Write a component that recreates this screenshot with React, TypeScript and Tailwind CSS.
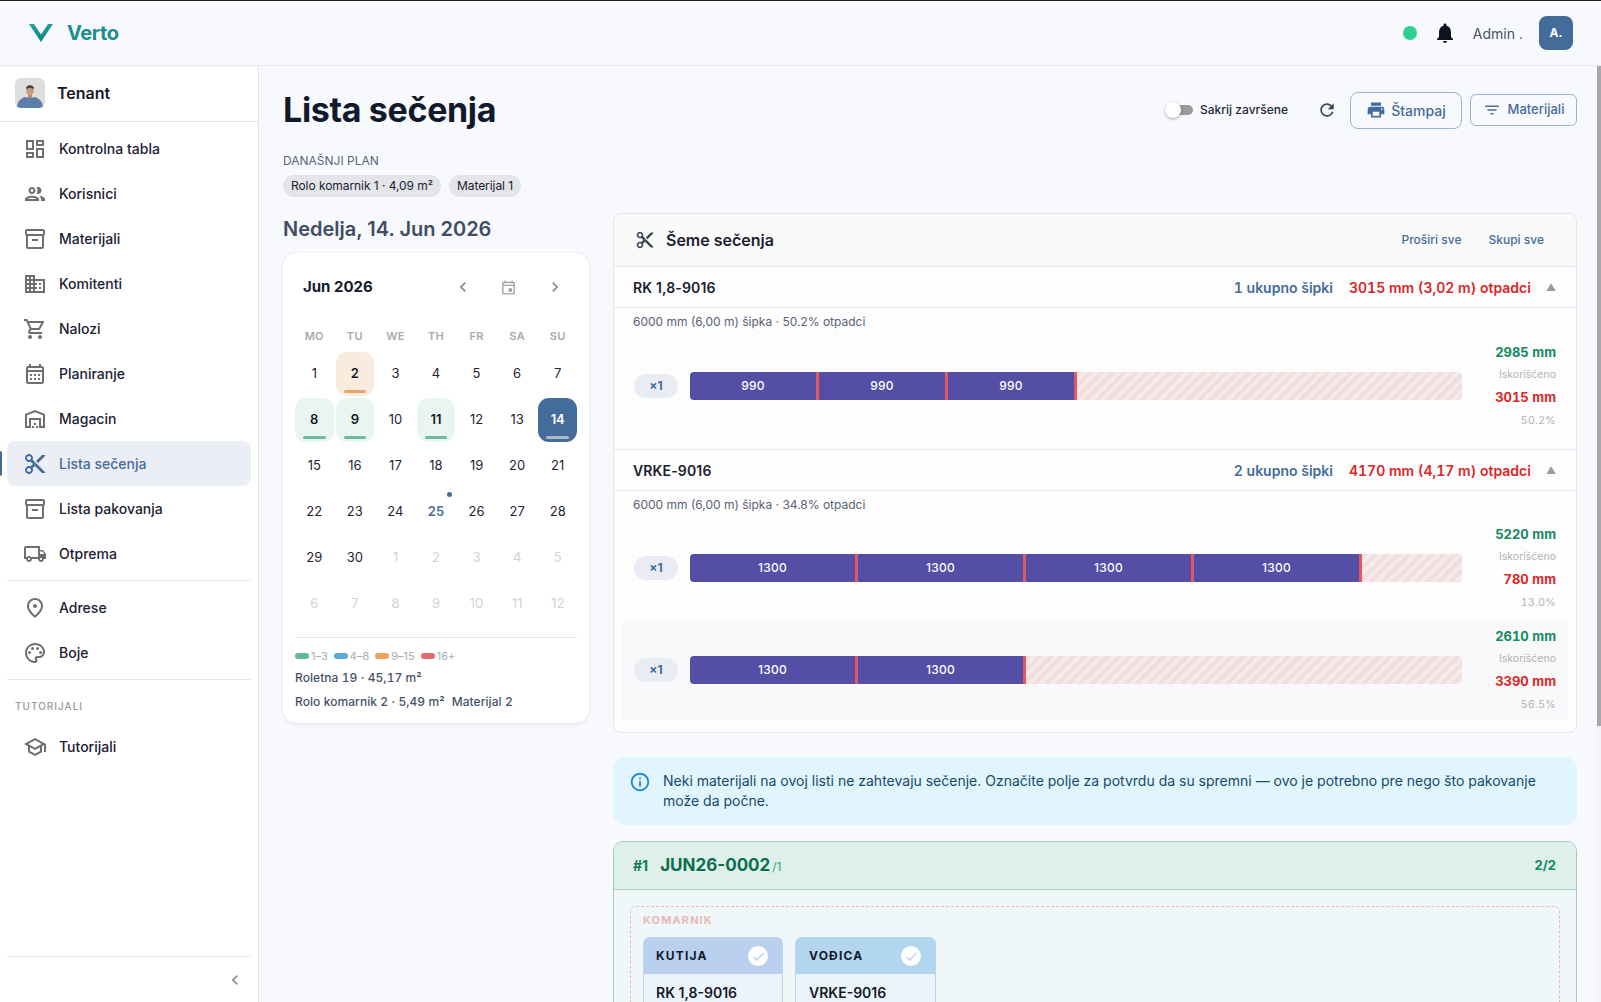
import React from "react";
import {
  MdOutlineDashboard, MdOutlineGroup, MdOutlineInventory2, MdOutlineShoppingCart, MdOutlineCalendarMonth,
  MdOutlineWarehouse, MdOutlineContentCut, MdOutlineLocalShipping, MdOutlinePlace, MdOutlinePalette,
  MdOutlineSchool, MdChevronLeft, MdChevronRight, MdOutlineEvent, MdNotifications, MdRefresh, MdPrint,
  MdFilterList, MdInfoOutline, MdCheck, MdBusiness,
} from "react-icons/md";

const nav1 = [
  ["Kontrolna tabla", MdOutlineDashboard],
  ["Korisnici", MdOutlineGroup],
  ["Materijali", MdOutlineInventory2],
  ["Komitenti", MdBusiness],
  ["Nalozi", MdOutlineShoppingCart],
  ["Planiranje", MdOutlineCalendarMonth],
  ["Magacin", MdOutlineWarehouse],
  ["Lista sečenja", MdOutlineContentCut],
  ["Lista pakovanja", MdOutlineInventory2],
  ["Otprema", MdOutlineLocalShipping],
] as const;

function NavItem({ label, Icon, active }: { label: string; Icon: React.ComponentType<{ className?: string }>; active?: boolean }) {
  return (
    <div className={`relative mx-[7px] flex h-[45px] items-center rounded-lg pl-[16px] ${active ? "bg-[#ebeef4] text-[#446c9a]" : "text-[#1b2133]"}`}>
      {active && <span className="absolute -left-[7px] top-[10px] h-[25px] w-[2px] rounded-r bg-[#446c9a]" />}
      <Icon className={`h-[24px] w-[24px] shrink-0 ${active ? "text-[#446c9a]" : "text-[#6f6f6f]"}`} />
      <span className="ml-[12px] text-[14px] font-medium">{label}</span>
    </div>
  );
}

function Avatar() {
  return (
    <svg viewBox="0 0 30 30" className="h-[30px] w-[30px] rounded-md">
      <rect width="30" height="30" fill="#dedede" />
      <path d="M2 30c0-6 3-9 8-11l5 1 5-1c5 2 8 5 8 11z" fill="#5b7fa8" />
      <rect x="13" y="16" width="4" height="4" fill="#b98a72" />
      <ellipse cx="15" cy="12.500" rx="3.800" ry="5" fill="#c99a80" />
      <path d="M11 11c-.5-5 8.500-5 8 0-2.500-1.500-5.500-1.500-8 0z" fill="#4d4036" />
    </svg>
  );
}

function Sidebar() {
  return (
    <aside className="flex w-[259px] shrink-0 flex-col border-r border-[#dfe5f0] bg-white">
      <div className="flex h-[56px] shrink-0 items-center gap-3 border-b border-[#e2e6ef] pb-[1px] pl-[15px]">
        <Avatar />
        <span className="text-[16px] font-semibold text-[#141a2a]">Tenant</span>
      </div>
      <div className="flex flex-col pt-[4px]">
        {nav1.map(([l, I]) => <NavItem key={l} label={l} Icon={I} active={l === "Lista sečenja"} />)}
      </div>
      <div className="mx-[7px] mb-[4px] mt-[4px] border-t border-[#e2e6ef]" />
      <NavItem label="Adrese" Icon={MdOutlinePlace} />
      <NavItem label="Boje" Icon={MdOutlinePalette} />
      <div className="mx-[7px] mt-[4px] border-t border-[#e2e6ef]" />
      <div className="pl-[15px] pt-[19px] text-[10px] font-medium tracking-[0.1em] text-[#9a9a9a]">TUTORIJALI</div>
      <div className="mt-[10px]"><NavItem label="Tutorijali" Icon={MdOutlineSchool} /></div>
      <div className="mx-[7px] mt-auto flex h-[46px] items-center justify-end border-t border-[#e2e6ef] pr-[6px]">
        <MdChevronLeft className="h-[20px] w-[20px] text-[#8a8a8a]" />
      </div>
    </aside>
  );
}

type Cell = { d: number; muted?: boolean; bg?: string; bar?: string; selected?: boolean; today?: boolean };
const cells: Cell[] = [
  { d: 1 }, { d: 2, bg: "bg-[#faebdf]", bar: "bg-[#e8a468]" }, { d: 3 }, { d: 4 }, { d: 5 }, { d: 6 }, { d: 7 },
  { d: 8, bg: "bg-[#e8f5f0]", bar: "bg-[#6dbb9b]" }, { d: 9, bg: "bg-[#e8f5f0]", bar: "bg-[#6dbb9b]" }, { d: 10 },
  { d: 11, bg: "bg-[#e8f5f0]", bar: "bg-[#6dbb9b]" }, { d: 12 }, { d: 13 }, { d: 14, selected: true },
  ...[15, 16, 17, 18, 19, 20, 21, 22, 23, 24].map((d) => ({ d })),
  { d: 25, today: true }, { d: 26 }, { d: 27 }, { d: 28 }, { d: 29 }, { d: 30 },
  ...[1, 2, 3, 4, 5, 6, 7, 8, 9, 10, 11, 12].map((d) => ({ d, muted: true })),
];

function Calendar() {
  return (
    <div className="w-[306px] rounded-[14px] bg-white px-3 pb-[12px] pt-[21px] shadow-[0_1px_4px_rgba(30,41,70,0.10)]">
      <div className="flex h-[26px] items-center pl-2">
        <span className="text-[15px] font-bold text-[#141a2a]">Jun 2026</span>
        <div className="ml-auto flex items-center text-[#8a8a8a]">
          <MdChevronLeft className="h-[20px] w-[20px]" />
          <MdOutlineEvent className="ml-[27px] h-[17px] w-[17px] text-[#a3a3a3]" />
          <MdChevronRight className="ml-[28px] mr-[12px] h-[20px] w-[20px]" />
        </div>
      </div>
      <div className="mt-[29px] grid grid-cols-7 gap-x-[2px] text-center text-[11px] font-semibold leading-[14px] tracking-[0.03em] text-[#aaaaaa]">
        {["MO", "TU", "WE", "TH", "FR", "SA", "SU"].map((w) => <div key={w}>{w}</div>)}
      </div>
      <div className="mt-[9px] grid grid-cols-7 gap-x-[2px] gap-y-[2px]">
        {cells.map((c, i) => (
          <div
            key={i}
            className={`relative flex h-[44px] items-center justify-center rounded-[11px] text-[13px] ${c.selected ? "bg-[#446c9a] font-semibold text-white" : c.bg ? `${c.bg} font-semibold text-[#141a2a]` : c.today ? "font-semibold text-[#446c9a]" : c.muted ? "text-[#d2d2d2]" : "text-[#1f2430]"}`}
          >
            {c.d}
            {c.bar && <span className={`absolute bottom-[3px] left-[8px] right-[8px] h-[3px] rounded-sm ${c.bar}`} />}
            {c.selected && <span className="absolute bottom-[3px] left-[8px] right-[8px] h-[3px] rounded-sm bg-[#aab9cc]" />}
            {c.today && <span className="absolute right-[3px] top-[2px] h-[5px] w-[5px] rounded-full bg-[#446c9a]" />}
          </div>
        ))}
      </div>
      <div className="mt-[11px] border-t border-[#e2e4ea] pt-[12px]">
        <div className="flex items-center gap-[6px] text-[11px] leading-[12px] text-[#adadad]">
          {[["bg-[#5fb896]", "1–3"], ["bg-[#5aa9e0]", "4–8"], ["bg-[#e8a45f]", "9–15"], ["bg-[#e56b6b]", "16+"]].map(([c, l]) => (
            <span key={l} className="flex items-center gap-[2px]">
              <span className={`h-[6px] w-[14px] rounded-full ${c}`} />
              {l}
            </span>
          ))}
        </div>
        <div className="mt-[7px] text-[12px] font-medium leading-[18px] tabular-nums tracking-[0.005em] text-[#46526a]">Roletna 19 · 45,17 m²</div>
        <div className="mt-[6px] flex gap-[7px] text-[12px] font-medium leading-[18px] tabular-nums tracking-[0.005em] text-[#46526a]">
          <span>Rolo komarnik 2 · 5,49 m²</span>
          <span>Materijal 2</span>
        </div>
      </div>
    </div>
  );
}

function Stat({ used, waste, pct }: { used: string; waste: string; pct: string }) {
  return (
    <div className="w-[94px] shrink-0 text-right tabular-nums">
      <div className="text-[13px] font-bold leading-[23px] text-[#118a5e]">{used}</div>
      <div className="text-[10.5px] leading-[22px] text-[#b3b3b3]">Iskorišćeno</div>
      <div className="text-[13px] font-bold leading-[23px] text-[#dc2626]">{waste}</div>
      <div className="text-[10.5px] leading-[23px] tracking-[0.03em] text-[#b3b3b3]">{pct}</div>
    </div>
  );
}

function BarRow({ label, widthClass, n, used, waste, pct, alt }: { label: string; widthClass: string; n: number; used: string; waste: string; pct: string; alt?: boolean }) {
  return (
    <div className={`flex h-[100px] items-center rounded px-3 ${alt ? "bg-[#f9f9fb]" : ""}`}>
      <span className="flex h-[24px] w-[44px] shrink-0 items-center justify-center rounded-full bg-[#e9edf3] text-[12px] font-bold text-[#446c9a]">×1</span>
      <div className="ml-3 flex h-[28px] flex-1 overflow-hidden rounded">
        {Array.from({ length: n }).map((_, i) => (
          <div key={i} className={`flex shrink-0 items-center justify-center border-r-[3px] border-[#e05a5f] bg-[#544ea5] text-[12px] font-medium tracking-[0.02em] text-white ${widthClass}`}>
            {label}
          </div>
        ))}
        <div className="flex-1 bg-[repeating-linear-gradient(135deg,#f3dedf_0px,#f3dedf_4px,#f5e9ea_4px,#f5e9ea_8px)]" />
      </div>
      <Stat used={used} waste={waste} pct={pct} />
    </div>
  );
}

function GroupHead({ name, total, waste, top }: { name: string; total: string; waste: string; top?: boolean }) {
  return (
    <div className={`flex items-center border-b border-[#e5e8f0] pl-[19px] pr-[20px] text-[14px] ${top ? "h-[41px]" : "h-[42px] border-t"}`}>
      <span className="font-semibold tracking-[0.01em] text-[#1a2030]">{name}</span>
      <span className="ml-auto font-semibold tabular-nums text-[#446c9a]">{total}</span>
      <span className="ml-4 font-semibold tabular-nums text-[#dc2626]">{waste}</span>
      <span className="ml-[15px] text-[10px] text-[#9a9a9a]">▲</span>
    </div>
  );
}

function Schemes() {
  return (
    <div className="overflow-hidden rounded-lg border border-[#e2e6ef] bg-[#fdfdfe]">
      <div className="flex h-[53px] items-center border-b border-[#e5e8f0] bg-[#fafafb] pl-[21px] pr-[32px]">
        <MdOutlineContentCut className="h-[20px] w-[20px] text-[#3a4356]" />
        <span className="ml-[11px] text-[16px] font-semibold text-[#1a2030]">Šeme sečenja</span>
        <span className="ml-auto text-[12px] font-medium text-[#446c9a]">Proširi sve</span>
        <span className="ml-[27px] text-[12px] font-medium text-[#446c9a]">Skupi sve</span>
      </div>
      <GroupHead top name="RK 1,8-9016" total="1 ukupno šipki" waste="3015 mm (3,02 m) otpadci" />
      <div className="px-2 pb-[13px] pt-[5px]">
        <div className="pl-[11px] text-[12px] leading-[18px] text-[#596274]">6000 mm (6,00 m) šipka · 50.2% otpadci</div>
        <div className="mt-[5px]"><BarRow label="990" widthClass="w-[129px]" n={3} used="2985 mm" waste="3015 mm" pct="50.2%" /></div>
      </div>
      <GroupHead name="VRKE-9016" total="2 ukupno šipki" waste="4170 mm (4,17 m) otpadci" />
      <div className="px-2 pb-[12px] pt-[5px]">
        <div className="pl-[11px] text-[12px] leading-[18px] text-[#596274]">6000 mm (6,00 m) šipka · 34.8% otpadci</div>
        <div className="mt-[4px]"><BarRow label="1300" widthClass="w-[168px]" n={4} used="5220 mm" waste="780 mm" pct="13.0%" /></div>
        <div className="mt-[2px]"><BarRow alt label="1300" widthClass="w-[168px]" n={2} used="2610 mm" waste="3390 mm" pct="56.5%" /></div>
      </div>
    </div>
  );
}

function Part({ title, code, head, width, pad }: { title: string; code: string; head: string; width: string; pad: string }) {
  return (
    <div className={`overflow-hidden rounded-md border border-[#bcd5ef] bg-[#ecf4fb] ${width}`}>
      <div className={`flex h-[36px] items-center justify-between pr-[14px] ${pad} ${head}`}>
        <span className="text-[12px] font-bold tracking-[0.1em] text-[#141a2a]">{title}</span>
        <span className="flex h-[20px] w-[20px] items-center justify-center rounded-full bg-white text-[#b9d3f0]"><MdCheck className="h-[15px] w-[15px]" /></span>
      </div>
      <div className={`py-[8px] text-[14px] font-semibold text-[#141a2a] ${pad}`}>{code}</div>
    </div>
  );
}

export default function App() {
  return (
    <div className="flex h-screen flex-col overflow-hidden border-t border-[#222] bg-[#f8f9fd] font-['Inter',sans-serif]">
      <header className="flex h-[65px] shrink-0 items-center border-b border-[#e2e6ef] bg-[#f8f9fd] pl-[29px] pr-[28px]">
        <svg viewBox="0 0 24 18" className="h-[18px] w-[24px]">
          <defs>
            <linearGradient id="vg" x1="0" y1="0" x2="0" y2="1">
              <stop offset="0" stopColor="#21a5a0" />
              <stop offset="1" stopColor="#0f7f7c" />
            </linearGradient>
          </defs>
          <path d="M0 0h5l7 10.500L19 0h5L12 18z" fill="url(#vg)" />
        </svg>
        <span className="ml-[14px] text-[20px] font-bold tracking-[-0.02em] text-[#1a8f8c]">Verto</span>
        <span className="ml-auto h-[14px] w-[14px] rounded-full bg-[#2dd08f]" />
        <MdNotifications className="ml-[16px] h-[24px] w-[24px] text-[#0c1220]" />
        <span className="ml-[16px] text-[14px] text-[#46526a]">Admin .</span>
        <span className="ml-[16px] flex h-[34px] w-[34px] items-center justify-center rounded-lg bg-[#446c9a] text-[12px] font-bold text-white">A.</span>
      </header>
      <div className="flex min-h-0 flex-1">
        <Sidebar />
        <main className="min-w-0 flex-1 overflow-hidden pl-6 pr-5">
          <div className="flex h-[72px] items-center pt-[16px]">
            <h1 className="text-[34px] font-bold leading-[44px] tracking-[-0.01em] text-[#111a2c]">Lista sečenja</h1>
            <div className="ml-auto flex items-center">
              <span className="relative h-[10px] w-[21px] rounded-full bg-[#9b9b9b]">
                <span className="absolute -left-[7px] -top-[3px] h-[16px] w-[16px] rounded-full bg-white shadow-[0_1px_3px_rgba(0,0,0,0.35)]" />
              </span>
              <span className="ml-[7px] text-[12px] font-medium text-[#1f2937]">Sakrij završene</span>
              <MdRefresh className="ml-[29px] h-[20px] w-[20px] text-[#3a4356]" />
              <span className="ml-[13px] flex h-[37px] w-[112px] items-center justify-center gap-[5px] rounded-lg border border-[#9ab4d2] text-[14px] font-medium text-[#446c9a]">
                <MdPrint className="h-[20px] w-[20px]" />Štampaj
              </span>
              <span className="ml-2 flex h-[32px] w-[107px] items-center justify-center gap-[7px] rounded-md border border-[#9ab4d2] text-[13px] font-medium text-[#446c9a]">
                <MdFilterList className="h-[18px] w-[18px]" />Materijali
              </span>
            </div>
          </div>
          <div className="mt-[14px] text-[12px] leading-[18px] text-[#5b6679]">DANAŠNJI PLAN</div>
          <div className="mt-[5px] flex gap-2 text-[12px] tracking-[-0.005em] text-[#1b2133]">
            <span className="flex h-[22px] items-center rounded-full bg-[#e3e5e9] px-2">Rolo komarnik 1 · 4,09 m²</span>
            <span className="flex h-[22px] items-center rounded-full bg-[#e3e5e9] px-2">Materijal 1</span>
          </div>
          <div className="mt-[16px] flex gap-6">
            <div className="w-[306px] shrink-0 pt-[4px]">
              <div className="text-[20px] font-semibold leading-[24px] text-[#3f4d63]">Nedelja, 14. Jun 2026</div>
              <div className="mt-[12px]"><Calendar /></div>
            </div>
            <div className="min-w-0 flex-1">
              <Schemes />
              <div className="mt-6 flex h-[68px] rounded-xl bg-[#e0f5fc] pl-[16px] pr-5 pt-[14px] text-[14px] leading-[20px] text-[#164a6b]">
                <MdInfoOutline className="h-[22px] w-[22px] shrink-0 text-[#1e88d8]" />
                <p className="ml-[12px]">Neki materijali na ovoj listi ne zahtevaju sečenje. Označite polje za potvrdu da su spremni — ovo je potrebno pre nego što pakovanje može da počne.</p>
              </div>
              <div className="mt-4 overflow-hidden rounded-[10px] border border-[#9ed0bc] bg-[#eff7f9]">
                <div className="flex h-[48px] items-center border-b border-[#a8d5c2] bg-[#dfefea] pl-[19px] pr-[20px]">
                  <span className="text-[14px] font-bold text-[#0e7a55]">#1</span>
                  <span className="ml-[12px] text-[17px] font-bold text-[#0b6e4f]">JUN26-0002</span>
                  <span className="ml-[2px] mt-[3px] text-[12px] text-[#3aa17e]">/1</span>
                  <span className="ml-auto text-[13px] font-bold text-[#118a5e]">2/2</span>
                </div>
                <div className="px-4 pb-4 pt-4">
                  <div className="rounded-md border border-dashed border-[#f2b6b6] px-3 pb-3 pt-[6px]">
                    <div className="text-[11px] font-bold leading-[14px] tracking-[0.1em] text-[#ecb8b8]">KOMARNIK</div>
                    <div className="mt-[10px] flex gap-3">
                      <Part title="KUTIJA" code="RK 1,8-9016" head="bg-[#b9d1ef]" width="w-[140px]" pad="pl-[12px]" />
                      <Part title="VOĐICA" code="VRKE-9016" head="bg-[#b2d5f0]" width="w-[141px]" pad="pl-[13px]" />
                    </div>
                  </div>
                </div>
              </div>
            </div>
          </div>
        </main>
        <div className="w-[4px] shrink-0 bg-[#f4f5f9]">
          <div className="h-[660px] bg-[#a9a9a9]" />
        </div>
      </div>
    </div>
  );
}
